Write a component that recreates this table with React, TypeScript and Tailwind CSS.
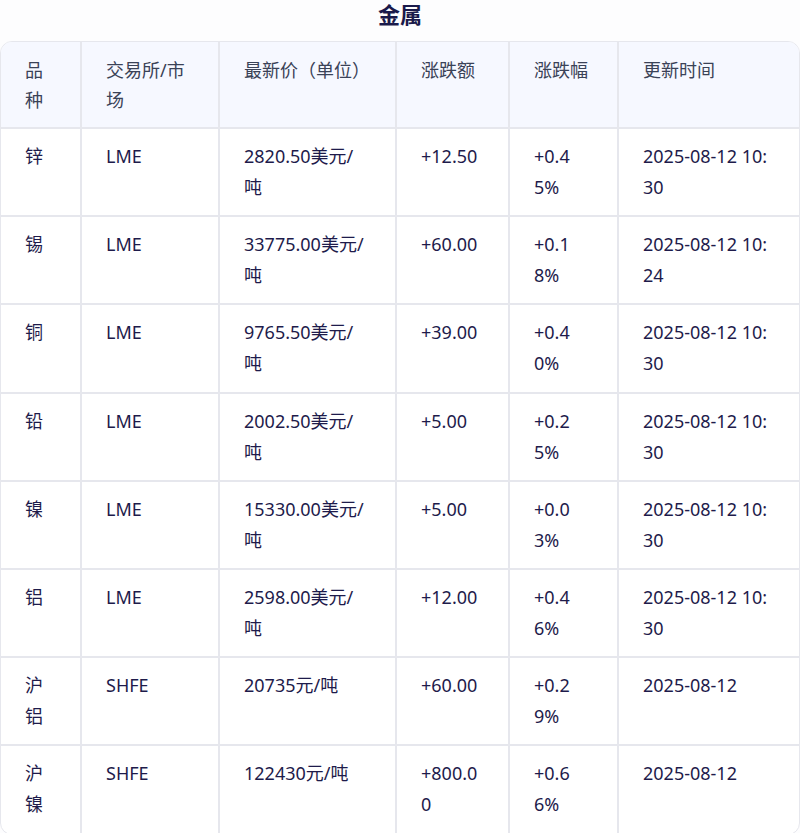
import React from 'react';

const rows = [
  ['锌', 'LME', '2820.50美元/吨', '+12.50', '+0.45%', '2025-08-12 10:30'],
  ['锡', 'LME', '33775.00美元/吨', '+60.00', '+0.18%', '2025-08-12 10:24'],
  ['铜', 'LME', '9765.50美元/吨', '+39.00', '+0.40%', '2025-08-12 10:30'],
  ['铅', 'LME', '2002.50美元/吨', '+5.00', '+0.25%', '2025-08-12 10:30'],
  ['镍', 'LME', '15330.00美元/吨', '+5.00', '+0.03%', '2025-08-12 10:30'],
  ['铝', 'LME', '2598.00美元/吨', '+12.00', '+0.46%', '2025-08-12 10:30'],
  ['沪铝', 'SHFE', '20735元/吨', '+60.00', '+0.29%', '2025-08-12'],
  ['沪镍', 'SHFE', '122430元/吨', '+800.00', '+0.66%', '2025-08-12'],
];

const headers = ['品种', '交易所/市场', '最新价（单位）', '涨跌额', '涨跌幅', '更新时间'];

export default function App() {
  return (
    <div
      className="min-h-screen bg-[#fdfdfe] text-[#1e1b4b]"
      style={{ fontFamily: '"Noto Sans", "Noto Sans CJK SC", sans-serif' }}
    >
      <h2 className="text-center text-[22px] font-bold leading-[28px] text-[#1a1a4b] pt-0 pb-[13px]">金属</h2>

      <div className="rounded-xl border border-[#e6e7ed] overflow-hidden bg-white">
        <table className="w-full table-fixed border-collapse text-[18px] leading-[31px]">
          <colgroup>
            <col className="w-[80px]" />
            <col className="w-[138px]" />
            <col className="w-[177px]" />
            <col className="w-[113px]" />
            <col className="w-[109px]" />
            <col />
          </colgroup>
          <thead>
            <tr className="bg-[#f6f8ff]">
              {headers.map((h, i) => (
                <th
                  key={h}
                  className={`px-6 pt-[13px] pb-[12px] text-left align-top font-normal text-[#3a4257] break-all border-b-2 border-[#e6e7ed] leading-[30px] ${i < 5 ? 'border-r-2' : ''}`}
                >
                  {h}
                </th>
              ))}
            </tr>
          </thead>
          <tbody>
            {rows.map((r, ri) => (
              <tr key={ri}>
                {r.map((c, i) => (
                  <td
                    key={i}
                    className={`px-6 py-3 h-[88.2px] align-top break-all border-[#e6e7ed] ${i < 5 ? 'border-r-2' : ''} ${ri < rows.length - 1 ? 'border-b-2' : ''}`}
                  >
                    {c}
                  </td>
                ))}
              </tr>
            ))}
          </tbody>
        </table>
      </div>
    </div>
  );
}
